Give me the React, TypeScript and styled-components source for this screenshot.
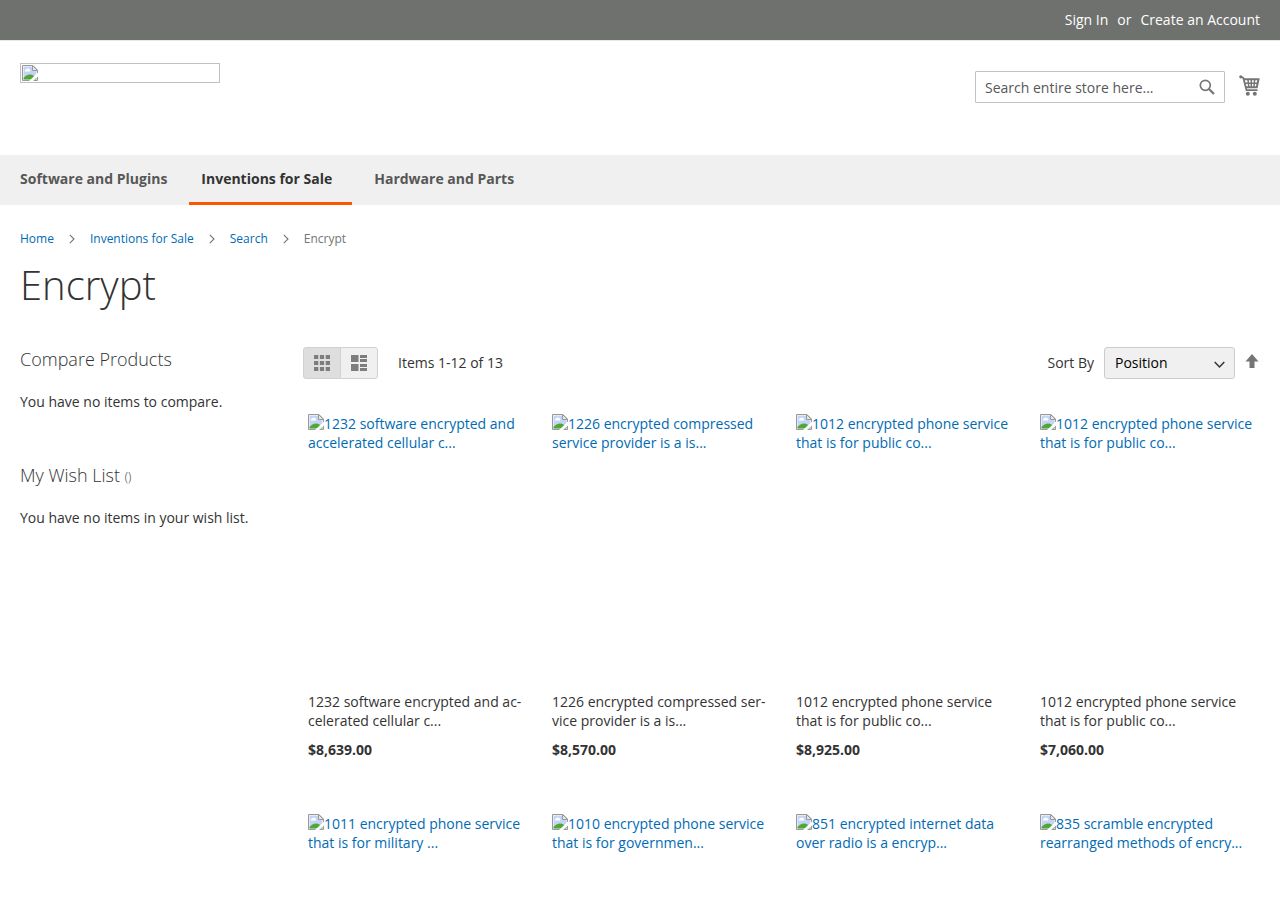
import React from "react";
import styled, { createGlobalStyle } from "styled-components";

const GlobalStyle = createGlobalStyle`
  *, *::before, *::after { box-sizing: border-box; }
  body {
    margin: 0;
    background: #fff;
    color: #333;
    font-family: "Open Sans", "Liberation Sans", sans-serif;
    font-size: 14px;
    line-height: 20px;
  }
  h1, h2, p, ol, ul { margin: 0; padding: 0; font-weight: 400; }
  ol, ul { list-style: none; }
  button, input, select { font: inherit; }
`;

const Container = styled.div`
  width: 100%;
  max-width: 1280px;
  margin: 0 auto;
  padding: 0 20px;
`;

const TopPanel = styled.div`
  background: #6e716e;
  border-bottom: 1px solid #e8e8e8;
  color: #fff;
`;

const AccountLinks = styled(Container)`
  display: flex;
  justify-content: flex-end;
  gap: 9px;
  padding-top: 10px;
  padding-bottom: 10px;
`;

const AccountLink = styled.a`
  color: #fff;
  text-decoration: none;
`;

const HeaderContent = styled(Container)`
  display: flex;
  justify-content: space-between;
  align-items: flex-start;
  padding-top: 22px;
  padding-bottom: 52px;
`;

const Logo = styled.a`
  display: flex;
  width: 200px;
  height: 20px;
  padding: 1px;
  border: 1px solid #c0c0c0;
`;

const HeaderTools = styled.div`
  display: flex;
  align-items: flex-start;
  gap: 14px;
  padding: 8px 0 0;
`;

const SearchForm = styled.form`
  display: flex;
  width: 250px;
  height: 32px;
  border: 1px solid #c2c2c2;
  border-radius: 1px;
`;

const SearchInput = styled.input`
  flex: 1;
  min-width: 0;
  padding: 2px 0 0 9px;
  border: 0;
  background: transparent;
  outline: 0;
  &::placeholder { color: #575757; opacity: 1; }
`;

const IconButton = styled.button`
  display: flex;
  align-items: center;
  justify-content: center;
  width: 34px;
  padding: 0;
  border: 0;
  background: none;
  color: #757575;
`;

const CartLink = styled.a`
  display: flex;
  padding-top: 4px;
  color: #757575;
`;

const NavBar = styled.nav`
  background: #f0f0f0;
`;

const NavList = styled.ul`
  display: flex;
  gap: 10px;
  width: 100%;
  max-width: 1280px;
  margin: 0 auto;
  padding: 0 8px;
`;

const NavLink = styled.a<{ $active?: boolean }>`
  display: block;
  height: 50px;
  padding: 0 ${(p) => (p.$active ? "20px" : "12px")} 0 12px;
  border-bottom: 3px solid ${(p) => (p.$active ? "#ff5501" : "transparent")};
  color: ${(p) => (p.$active ? "#333" : "#575757")};
  font-weight: 700;
  line-height: 47px;
  text-decoration: none;
`;

const Breadcrumbs = styled.ol`
  display: flex;
  align-items: center;
  padding: 26px 0 16px;
  color: #757575;
  font-size: 12px;
  line-height: 16px;
`;

const Crumb = styled.li`
  display: flex;
  align-items: center;
`;

const CrumbLink = styled.a`
  color: #006bb4;
  text-decoration: none;
`;

const CrumbSeparator = styled.svg`
  margin: 0 15px;
`;

const PageTitle = styled.h1`
  margin-bottom: 40px;
  font-size: 40px;
  font-weight: 300;
  line-height: 44px;
`;

const Columns = styled.div`
  display: grid;
  grid-template-columns: 263px minmax(0, 1fr);
  gap: 20px;
`;

const Sidebar = styled.aside`
  display: flex;
  flex-direction: column;
  gap: 53px;
  padding-top: 2px;
`;

const Block = styled.section`
  display: flex;
  flex-direction: column;
  gap: 23px;
`;

const BlockTitle = styled.h2`
  font-size: 18px;
  font-weight: 300;
  line-height: 20px;
`;

const Counter = styled.span`
  font-size: 12px;
  line-height: 12px;
  vertical-align: 1px;
`;

const Toolbar = styled.div`
  display: flex;
  align-items: center;
  height: 32px;
  margin-bottom: 35px;
`;

const Modes = styled.div`
  display: flex;
  height: 32px;
  margin-right: 20px;
`;

const ModeButton = styled.button<{ $active?: boolean }>`
  display: flex;
  align-items: center;
  justify-content: center;
  width: 38px;
  padding: 0;
  border: 1px solid #d1d1d1;
  border-radius: 3px 0 0 3px;
  background: ${(p) => (p.$active ? "#dedede" : "#f0f0f0")};
  color: #7d7d7d;
  & + & {
    margin-left: -1px;
    border-radius: 0 3px 3px 0;
  }
`;

const Sorter = styled.div`
  display: flex;
  align-items: center;
  gap: 10px;
  margin-left: auto;
`;

const SelectBox = styled.div`
  position: relative;
  display: flex;
`;

const SortSelect = styled.select`
  appearance: none;
  width: 131px;
  height: 32px;
  padding: 0 25px 0 10px;
  border: 1px solid #ccc;
  border-radius: 3px;
  background: #f0f0f0;
  color: #000;
`;

const SelectArrow = styled.svg`
  position: absolute;
  top: 14px;
  right: 10px;
  pointer-events: none;
`;

const SortDirection = styled.a`
  display: flex;
  padding: 0 1px 4px 0;
  color: #757575;
`;

const ProductGrid = styled.ol`
  display: grid;
  grid-template-columns: repeat(4, minmax(0, 1fr));
  gap: 54px 19px;
`;

const ProductItem = styled.li`
  display: flex;
  flex-direction: column;
  gap: 10px;
  padding: 0 5px;
  line-height: 19px;
`;

const ProductPhoto = styled.a`
  display: block;
  min-height: 268px;
  color: #006bb4;
  text-decoration: none;
`;

const PhotoIcon = styled.svg`
  vertical-align: -1px;
`;

const ProductName = styled.a`
  color: #333;
  text-decoration: none;
`;

const Price = styled.span`
  font-weight: 700;
  line-height: 20px;
`;

const brokenImageShapes = (
  <>
    <path d="M.5 .5H11L15.500 5V15.500H.5Z" fill="#fff" stroke="#999" />
    <path d="M1.500 1.500H10.500V5.500H14.500V14.500H1.500Z" fill="#c3d4f7" />
    <path d="M3 6.500a1.300 1.300 0 0 1 1-2 2 2 0 0 1 3.500 0 1.200 1.200 0 0 1 .5 2Z" fill="#fff" />
    <path d="M1.500 14.500V13C3.500 11 5.500 9.500 8 9.500S12.500 11 14.500 13.500V14.500Z" fill="#4fa833" />
    <path d="M10.500 .5V5.500H15.500Z" fill="#e8e8e8" stroke="#999" />
    <path d="M7 16L16 7.500V11.500L11 16Z" fill="#fff" />
  </>
);

const crumbs = ["Home", "Inventions for Sale", "Search"];

interface Product {
  id: number;
  alt: string;
  name?: string;
  price?: string;
}

const products: Product[] = [
  {
    id: 1,
    alt: "1232 software encrypted and accelerated cellular c...",
    name: "1232 software encrypted and ac\u00ADcelerated cellular c...",
    price: "$8,639.00",
  },
  {
    id: 2,
    alt: "1226 encrypted compressed service provider is a is...",
    name: "1226 encrypted compressed ser\u00ADvice provider is a is...",
    price: "$8,570.00",
  },
  {
    id: 3,
    alt: "1012 encrypted phone service that is for public co...",
    name: "1012 encrypted phone service that is for public co...",
    price: "$8,925.00",
  },
  {
    id: 4,
    alt: "1012 encrypted phone service that is for public co...",
    name: "1012 encrypted phone service that is for public co...",
    price: "$7,060.00",
  },
  { id: 5, alt: "1011 encrypted phone service that is for military ..." },
  { id: 6, alt: "1010 encrypted phone service that is for governmen..." },
  { id: 7, alt: "851 encrypted internet data over radio is a encryp..." },
  { id: 8, alt: "835 scramble encrypted rearranged methods of encry..." },
];

export default function App() {
  return (
    <>
      <GlobalStyle />
      <header>
        <TopPanel>
          <AccountLinks>
            <AccountLink href="#signin">Sign In</AccountLink>
            <span>or</span>
            <AccountLink href="#create">Create an Account</AccountLink>
          </AccountLinks>
        </TopPanel>
        <HeaderContent>
          <Logo href="#home" aria-label="Store home">
            <svg width="16" height="16" viewBox="0 0 16 16">{brokenImageShapes}</svg>
          </Logo>
          <HeaderTools>
            <SearchForm role="search" onSubmit={(e) => e.preventDefault()}>
              <SearchInput type="text" aria-label="Search" placeholder="Search entire store here..." />
              <IconButton type="submit" aria-label="Search">
                <svg width="16" height="16" viewBox="0 0 16 16" fill="none" stroke="currentColor">
                  <circle cx="6.300" cy="6.300" r="5" strokeWidth="1.700" />
                  <path d="M10 10L15 15" strokeWidth="2.200" />
                </svg>
              </IconButton>
            </SearchForm>
            <CartLink href="#cart" aria-label="My Cart">
              <svg width="21" height="22" viewBox="0 0 21 22" fill="none" stroke="currentColor">
                <circle cx="1.800" cy="1.800" r="1.600" fill="currentColor" stroke="none" />
                <path d="M1.500 1.500L4.300 2.800L7.500 15.200H18.500" strokeWidth="1.800" />
                <path d="M4.500 4.300H19.500L17.800 12.300H7" strokeWidth="2" />
                <path d="M6 8.200H18.500M9 4.500L9.800 12M12.300 4.500V12M15.600 4.500L15 12" strokeWidth="1.500" />
                <circle cx="8.800" cy="18.700" r="2" fill="currentColor" stroke="none" />
                <circle cx="15.800" cy="18.700" r="2" fill="currentColor" stroke="none" />
              </svg>
            </CartLink>
          </HeaderTools>
        </HeaderContent>
        <NavBar>
          <NavList>
            <li><NavLink href="#software">Software and Plugins</NavLink></li>
            <li><NavLink href="#inventions" $active>Inventions for Sale</NavLink></li>
            <li><NavLink href="#hardware">Hardware and Parts</NavLink></li>
          </NavList>
        </NavBar>
      </header>
      <Container>
        <Breadcrumbs>
          {crumbs.map((label) => (
            <Crumb key={label}>
              <CrumbLink href="#crumb">{label}</CrumbLink>
              <CrumbSeparator width="6" height="10" viewBox="0 0 6 10" fill="none" stroke="#757575">
                <path d="M.8 .8L5 5L.8 9.200" strokeWidth="1.100" />
              </CrumbSeparator>
            </Crumb>
          ))}
          <Crumb>Encrypt</Crumb>
        </Breadcrumbs>
        <PageTitle>Encrypt</PageTitle>
        <Columns>
          <Sidebar>
            <Block>
              <BlockTitle>Compare Products</BlockTitle>
              <p>You have no items to compare.</p>
            </Block>
            <Block>
              <BlockTitle>My Wish List <Counter>()</Counter></BlockTitle>
              <p>You have no items in your wish list.</p>
            </Block>
          </Sidebar>
          <main>
            <Toolbar>
              <Modes>
                <ModeButton type="button" $active aria-label="Grid">
                  <svg width="16" height="16" viewBox="0 0 16 16" fill="currentColor">
                    <path d="M0 0h4.300v4H0zM5.900 0h4.200v4H5.900zM11.700 0h4.300v4h-4.300zM0 6h4.300v4H0zM5.900 6h4.200v4H5.900zM11.700 6h4.300v4h-4.300zM0 12h4.300v4H0zM5.900 12h4.200v4H5.900zM11.700 12h4.300v4h-4.300z" />
                  </svg>
                </ModeButton>
                <ModeButton type="button" aria-label="List">
                  <svg width="16" height="16" viewBox="0 0 16 16" fill="currentColor">
                    <path d="M0 0h7.500v7H0zM9 0h7v3H9zM9 4h7v3H9zM0 9h7.500v7H0zM9 9h7v3H9zM9 13h7v3H9z" />
                  </svg>
                </ModeButton>
              </Modes>
              <p>Items 1-12 of 13</p>
              <Sorter>
                <label htmlFor="sorter">Sort By</label>
                <SelectBox>
                  <SortSelect id="sorter" defaultValue="position">
                    <option value="position">Position</option>
                  </SortSelect>
                  <SelectArrow width="11" height="8" viewBox="0 0 11 8" fill="none" stroke="#333">
                    <path d="M.7 1L5.500 6L10.300 1" strokeWidth="1.500" />
                  </SelectArrow>
                </SelectBox>
                <SortDirection href="#descending" aria-label="Set Descending Direction">
                  <svg width="14" height="14" viewBox="0 0 14 14" fill="currentColor">
                    <path d="M7 0L13.500 7.500H9.500V14H4.500V7.500H.5Z" />
                  </svg>
                </SortDirection>
              </Sorter>
            </Toolbar>
            <ProductGrid>
              {products.map(({ id, alt, name, price }) => (
                <ProductItem key={id}>
                  <ProductPhoto href="#product">
                    <PhotoIcon width="16" height="16" viewBox="0 0 16 16">{brokenImageShapes}</PhotoIcon>
                    {alt}
                  </ProductPhoto>
                  {name && <ProductName href="#product">{name}</ProductName>}
                  {price && <Price>{price}</Price>}
                </ProductItem>
              ))}
            </ProductGrid>
          </main>
        </Columns>
      </Container>
    </>
  );
}
